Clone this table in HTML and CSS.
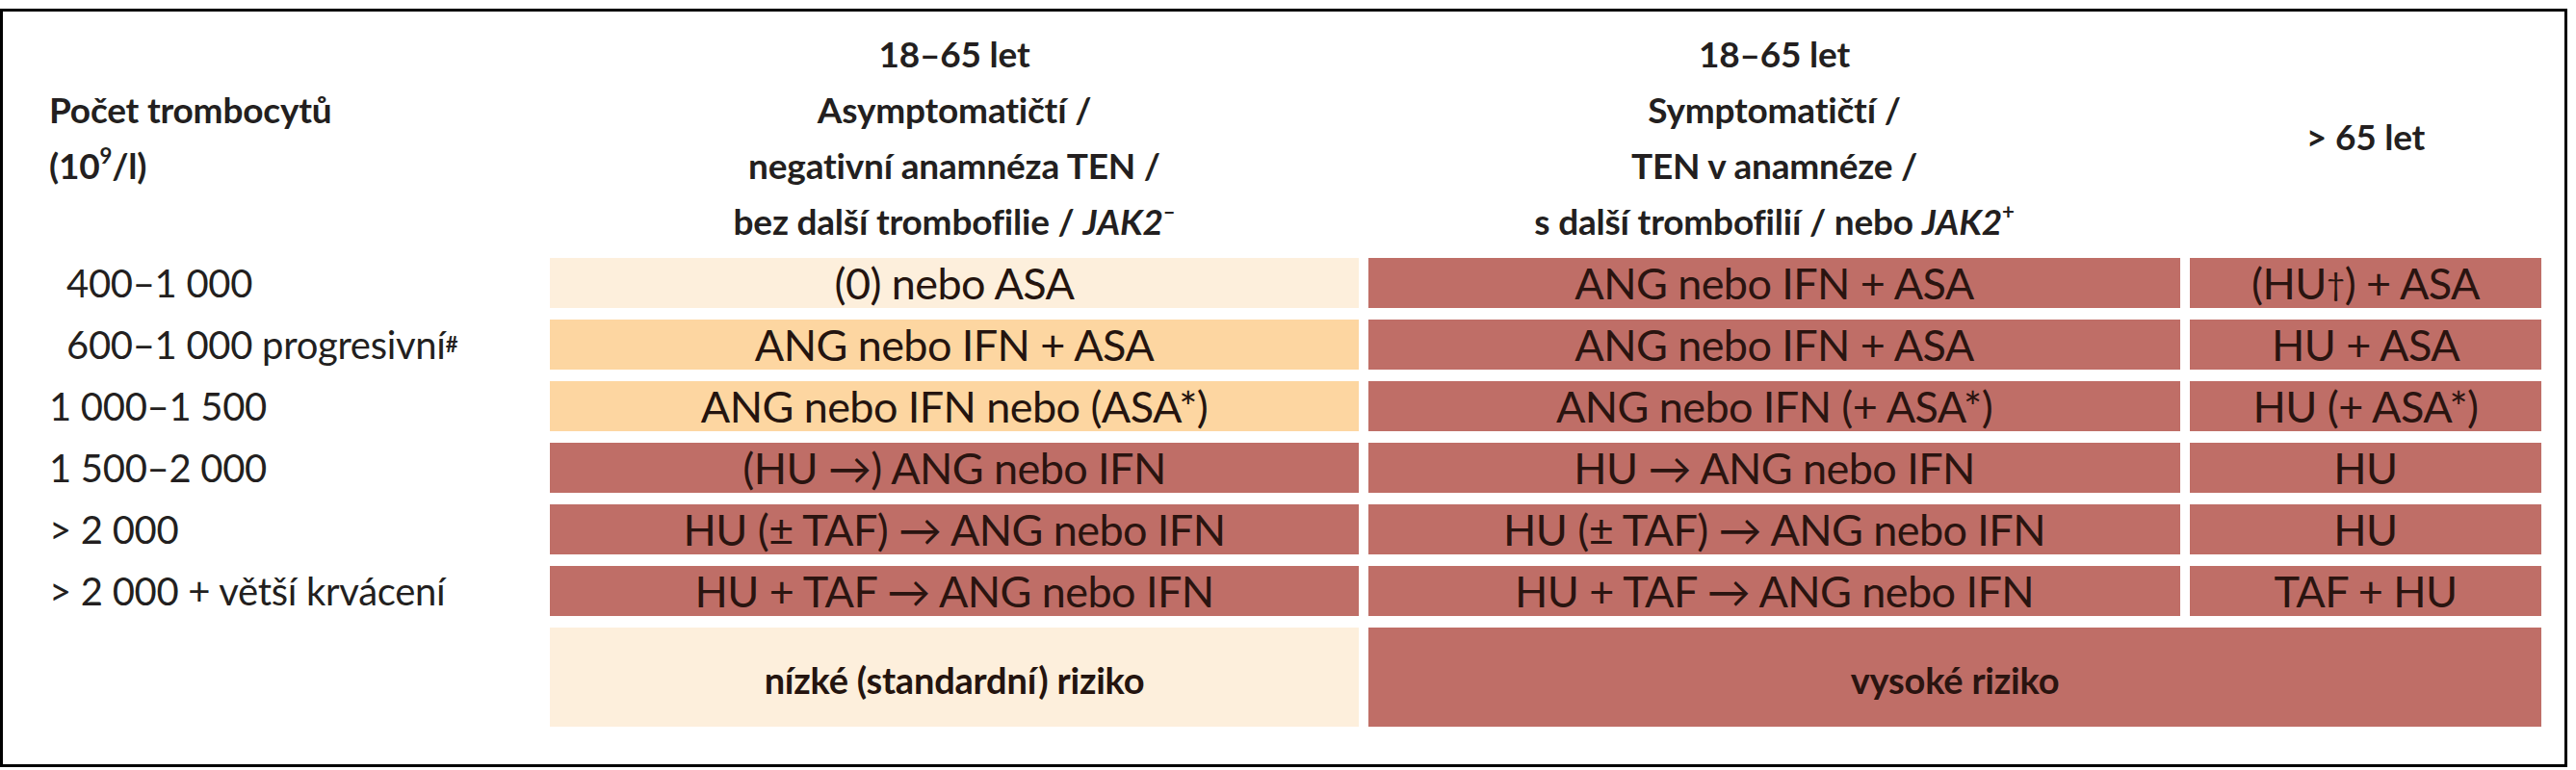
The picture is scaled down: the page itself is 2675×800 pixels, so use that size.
FILE: index.html
```html
<!DOCTYPE html>
<html lang="cs">
<head>
<meta charset="utf-8">
<title>Počet trombocytů</title>
<link rel="stylesheet" href="styles.css">
</head>
<body>
<div class="frame">
  <div class="table">
    <div class="hd hd-label">Počet trombocytů<br>(10<sup>9</sup>/l)</div>
    <div class="hd">18–65 let<br>Asymptomatičtí /<br>negativní anamnéza TEN /<br>bez další trombofilie / <i>JAK2</i><sup>–</sup></div>
    <div class="hd">18–65 let<br>Symptomatičtí /<br>TEN v anamnéze /<br>s další trombofilií / nebo <i>JAK2</i><sup>+</sup></div>
    <div class="hd hd-old">&gt; 65 let</div>

    <div class="lbl indent">400–1 000</div>
    <div class="cell cream">(0) nebo ASA</div>
    <div class="cell red">ANG nebo IFN + ASA</div>
    <div class="cell red">(HU<sup class="dag">†</sup>) + ASA</div>

    <div class="lbl indent">600–1 000 progresivní<sup class="hash">#</sup></div>
    <div class="cell peach">ANG nebo IFN + ASA</div>
    <div class="cell red">ANG nebo IFN + ASA</div>
    <div class="cell red">HU + ASA</div>

    <div class="lbl">1 000–1 500</div>
    <div class="cell peach">ANG nebo IFN nebo (ASA*)</div>
    <div class="cell red">ANG nebo IFN (+ ASA*)</div>
    <div class="cell red">HU (+ ASA*)</div>

    <div class="lbl">1 500–2 000</div>
    <div class="cell red">(HU →) ANG nebo IFN</div>
    <div class="cell red">HU → ANG nebo IFN</div>
    <div class="cell red">HU</div>

    <div class="lbl">&gt; 2 000</div>
    <div class="cell red">HU (± TAF) → ANG nebo IFN</div>
    <div class="cell red">HU (± TAF) → ANG nebo IFN</div>
    <div class="cell red">HU</div>

    <div class="lbl">&gt; 2 000 + větší krvácení</div>
    <div class="cell red">HU + TAF → ANG nebo IFN</div>
    <div class="cell red">HU + TAF → ANG nebo IFN</div>
    <div class="cell red">TAF + HU</div>

    <div class="lbl"></div>
    <div class="cell cream risk">nízké (standardní) riziko</div>
    <div class="cell red risk span2">vysoké riziko</div>
  </div>
</div>
</body>
</html>
```

FILE: styles.css
```css
html, body {
  margin: 0;
  padding: 0;
  background: #ffffff;
}
body {
  padding-top: 9px;
  font-family: Lato, "Open Sans", "Noto Sans", sans-serif;
  color: #231f20;
}
.frame {
  width: 2660px;
  height: 782px;
  border: 3px solid #000;
  box-sizing: content-box;
  background: #fff;
}
.table {
  display: grid;
  grid-template-columns: 558px 840px 843px 365px;
  grid-template-rows: 244px repeat(6, 52px) 103px;
  column-gap: 10px;
  row-gap: 12px;
}
.hd {
  font-weight: 700;
  font-size: 37px;
  line-height: 58px;
  text-align: center;
  padding-top: 15px;
  white-space: nowrap;
  letter-spacing: -0.2px;
}
.hd-label {
  text-align: left;
  padding-top: 73px;
  padding-left: 48px;
}
.hd-old {
  padding-top: 101px;
}
sup {
  font-size: 0.6em;
  line-height: 0;
  vertical-align: 0.7em;
}
sup.dag {
  font-size: 0.75em;
  vertical-align: 0.45em;
}
sup.hash {
  font-weight: 700;
  font-size: 0.55em;
}
.lbl {
  display: flex;
  align-items: center;
  padding-left: 48px;
  font-size: 40px;
  font-weight: 400;
  white-space: nowrap;
  letter-spacing: -0.3px;
}
.lbl.indent {
  padding-left: 66px;
}
.cell {
  display: flex;
  align-items: center;
  justify-content: center;
  font-size: 45px;
  font-weight: 400;
  white-space: nowrap;
  letter-spacing: -0.6px;
  color: #24140f;
}
.cream { background: #fdefdc; }
.peach { background: #fdd6a1; }
.red { background: #bf6e67; color: #2a1410; }
.risk {
  font-weight: 700;
  font-size: 38px;
  letter-spacing: -0.2px;
  padding-top: 4px;
}
.span2 { grid-column: span 2; }
```
